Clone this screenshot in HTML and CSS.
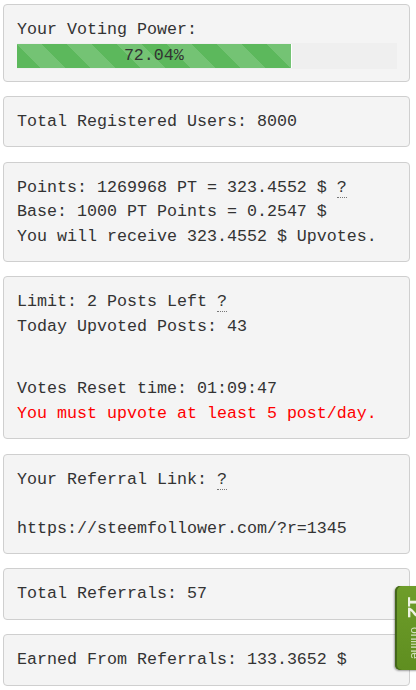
FILE: index.html
```html
<!DOCTYPE html>
<html>
<head>
<meta charset="utf-8">
<link rel="stylesheet" href="styles.css">
</head>
<body>
<div class="page">
  <div class="well">
    <div class="line">Your Voting Power:</div>
    <div class="track">
      <div class="fill" style="width: 72.04%">72.04%</div>
    </div>
  </div>

  <div class="well">
    <div class="line">Total Registered Users: 8000</div>
  </div>

  <div class="well">
    <div class="line">Points: 1269968 PT = 323.4552 $ <abbr class="hint" title="info">?</abbr></div>
    <div class="line">Base: 1000 PT Points = 0.2547 $</div>
    <div class="line">You will receive 323.4552 $ Upvotes.</div>
  </div>

  <div class="well">
    <div class="line">Limit: 2 Posts Left <abbr class="hint" title="info">?</abbr></div>
    <div class="line">Today Upvoted Posts: 43</div>
    <div class="line blank gap">&nbsp;</div>
    <div class="line">Votes Reset time: 01:09:47</div>
    <div class="line warn">You must upvote at least 5 post/day.</div>
  </div>

  <div class="well">
    <div class="line">Your Referral Link: <abbr class="hint" title="info">?</abbr></div>
    <div class="line blank">&nbsp;</div>
    <div class="line">https://steemfollower.com/?r=1345</div>
  </div>

  <div class="well">
    <div class="line">Total Referrals: 57</div>
  </div>

  <div class="well last">
    <div class="line">Earned From Referrals: 133.3652 $</div>
  </div>
</div>

<div class="online">
  <span class="online-text"><b class="online-num">12</b> <span class="online-word">online</span></span>
</div>
</body>
</html>
```

FILE: styles.css
```css
html, body {
  margin: 0;
  padding: 0;
  background: #ffffff;
}

body {
  font-family: "Liberation Mono", "DejaVu Sans Mono", monospace;
  font-size: 16.67px;
  color: #333333;
}

.page {
  padding: 4px 6px 0 3px;
}

.well {
  background: #f4f4f4;
  border: 1px solid #cfcfcf;
  border-radius: 4px;
  padding: 13px 12px 12px 13px;
  margin-bottom: 14.3px;
}

.well.last {
  margin-bottom: 0;
}

.line {
  line-height: 24.5px;
  white-space: nowrap;
}

.gap {
  margin-bottom: 13.5px;
}

.warn {
  color: #ff0000;
}

.hint {
  text-decoration: none;
  border-bottom: 1px dotted #777777;
  cursor: help;
}

.track {
  background: #efefef;
  height: 24px;
  padding: 1px 0;
}

.fill {
  height: 24px;
  line-height: 24px;
  text-align: center;
  color: #333333;
  background-color: #5cb85c;
  background-image: linear-gradient(45deg,
    rgba(255,255,255,.15) 25%, transparent 25%,
    transparent 50%, rgba(255,255,255,.15) 50%,
    rgba(255,255,255,.15) 75%, transparent 75%, transparent);
  background-size: 50px 50px;
  box-shadow: 1px 0 0 #ffffff;
}

.online {
  position: fixed;
  left: 395px;
  top: 586px;
  width: 30px;
  height: 84px;
  overflow: hidden;
  border-radius: 5px 0 0 5px;
  background: linear-gradient(180deg, #6e9d2a 0%, #5f8e20 100%);
  box-shadow: inset 2px 0 0 #44661a, -1px 1px 2px rgba(0,0,0,0.35);
}

.online-text {
  position: absolute;
  left: 8px;
  top: 10px;
  writing-mode: vertical-rl;
  font-family: "Liberation Sans", Arial, sans-serif;
  color: #eef4e2;
  white-space: nowrap;
}

.online-num {
  font-size: 20px;
  font-weight: bold;
}

.online-word {
  font-size: 12px;
  margin-top: 4px;
  color: rgba(238,244,226,0.8);
}
```
